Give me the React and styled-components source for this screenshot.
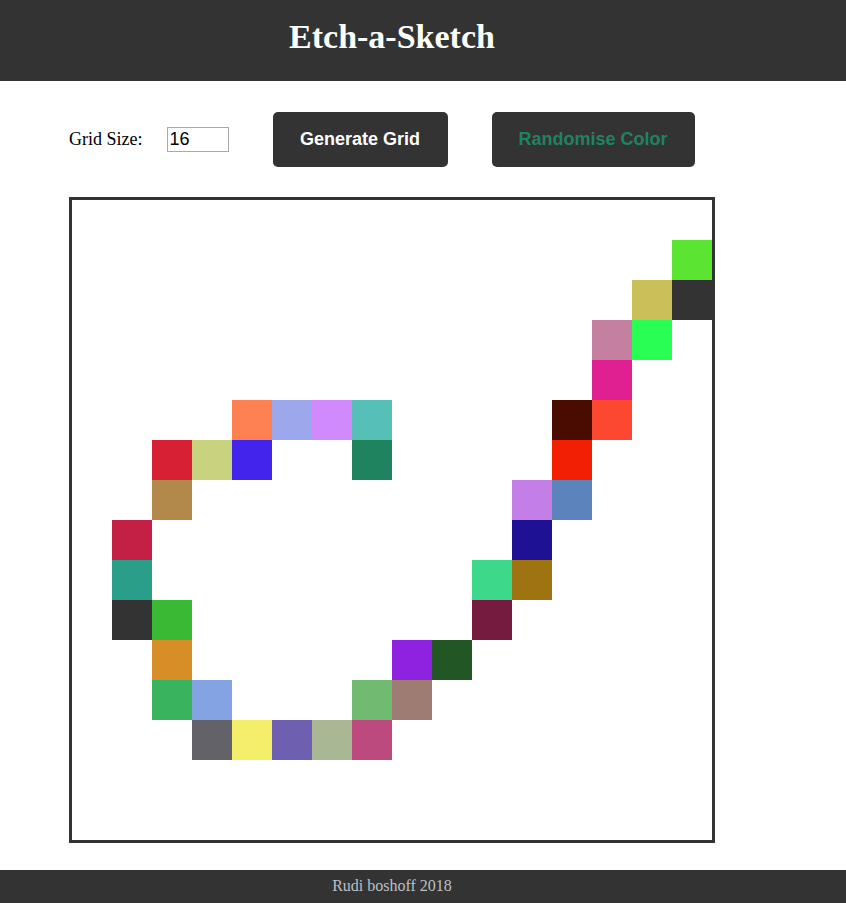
import React from "react";
import styled, { createGlobalStyle } from "styled-components";

const Global = createGlobalStyle`
  html, body { margin: 0; padding: 0; background: #fff; }
  body { font-family: "Liberation Serif", "Times New Roman", serif; }
`;

const Header = styled.header`
  background: #333;
  height: 81px;
  display: flex;
  align-items: center;
`;

const HeaderInner = styled.div`
  width: 784px;
  text-align: center;
`;

const Title = styled.h1`
  margin: 0;
  font-family: "Liberation Serif", serif;
  font-weight: bold;
  font-size: 34px;
  color: #fff;
  line-height: 1;
  padding-bottom: 8px;
`;

const Main = styled.main`
  padding: 31px 0 0 69px;
`;

const Controls = styled.div`
  display: flex;
  align-items: center;
  height: 55px;
`;

const Label = styled.label`
  font-size: 18px;
  color: #000;
  margin-right: 24px;
`;

const SizeInput = styled.input`
  box-sizing: border-box;
  width: 62px;
  height: 25px;
  border: 1px solid #a9a9a9;
  padding: 1px 2px;
  font-family: "Liberation Sans", Arial, sans-serif;
  font-size: 18px;
  color: #000;
  margin-right: 44px;
  outline: none;
`;

const Button = styled.button`
  height: 55px;
  padding: 0 ${(p) => p.$px}px;
  background: #333;
  border: none;
  border-radius: 5px;
  font-family: "Liberation Sans", Arial, sans-serif;
  font-weight: bold;
  font-size: 18px;
  color: ${(p) => p.$color};
  margin-right: 44px;
  cursor: pointer;
`;

const Board = styled.div`
  margin-top: 30px;
  width: 640px;
  height: 640px;
  border: 3px solid #333;
  display: grid;
  grid-template-columns: repeat(16, 40px);
  grid-template-rows: repeat(16, 40px);
`;

const Cell = styled.div`
  background: ${(p) => p.$c || "#fff"};
`;

const Footer = styled.footer`
  margin-top: 27px;
  background: #333;
  height: 33px;
  display: flex;
  align-items: center;
`;

const FooterText = styled.div`
  width: 784px;
  text-align: center;
  font-size: 16px;
  color: #bcc0c4;
  padding-bottom: 2px;
`;

const painted = {
  "1,15": "#5be532",
  "2,14": "#c9c05a",
  "2,15": "#333333",
  "3,13": "#c57fa0",
  "3,14": "#29fe55",
  "4,13": "#e01f91",
  "5,4": "#fe8154",
  "5,5": "#9da7eb",
  "5,6": "#d08afb",
  "5,7": "#56bfb6",
  "5,12": "#4b0c00",
  "5,13": "#fc4831",
  "6,2": "#d72034",
  "6,3": "#c9d27c",
  "6,4": "#4224ea",
  "6,7": "#1f8360",
  "6,12": "#f31f04",
  "7,2": "#b2894a",
  "7,11": "#c47fe6",
  "7,12": "#5c83bb",
  "8,1": "#c42046",
  "8,11": "#1e1193",
  "9,1": "#2b9e8a",
  "9,10": "#3dd88a",
  "9,11": "#9f7212",
  "10,1": "#333333",
  "10,2": "#3ab935",
  "10,10": "#741b3f",
  "11,2": "#d78e27",
  "11,8": "#8e22df",
  "11,9": "#225625",
  "12,2": "#39b35e",
  "12,3": "#84a3e2",
  "12,7": "#70ba71",
  "12,8": "#9e7b73",
  "13,3": "#636268",
  "13,4": "#f4ef6a",
  "13,5": "#6f5fb1",
  "13,6": "#a9b794",
  "13,7": "#bd4a7e",
};

export default function App() {
  const cells = [];
  for (let r = 0; r < 16; r++) {
    for (let c = 0; c < 16; c++) {
      cells.push(<Cell key={`${r}-${c}`} $c={painted[`${r},${c}`]} />);
    }
  }
  return (
    <>
      <Global />
      <Header>
        <HeaderInner>
          <Title>Etch-a-Sketch</Title>
        </HeaderInner>
      </Header>
      <Main>
        <Controls>
          <Label htmlFor="size">Grid Size:</Label>
          <SizeInput id="size" defaultValue="16" />
          <Button $px={27.5} $color="#fff">Generate Grid</Button>
          <Button $px={27} $color="#1f8360">Randomise Color</Button>
        </Controls>
        <Board>{cells}</Board>
      </Main>
      <Footer>
        <FooterText>Rudi boshoff 2018</FooterText>
      </Footer>
    </>
  );
}
